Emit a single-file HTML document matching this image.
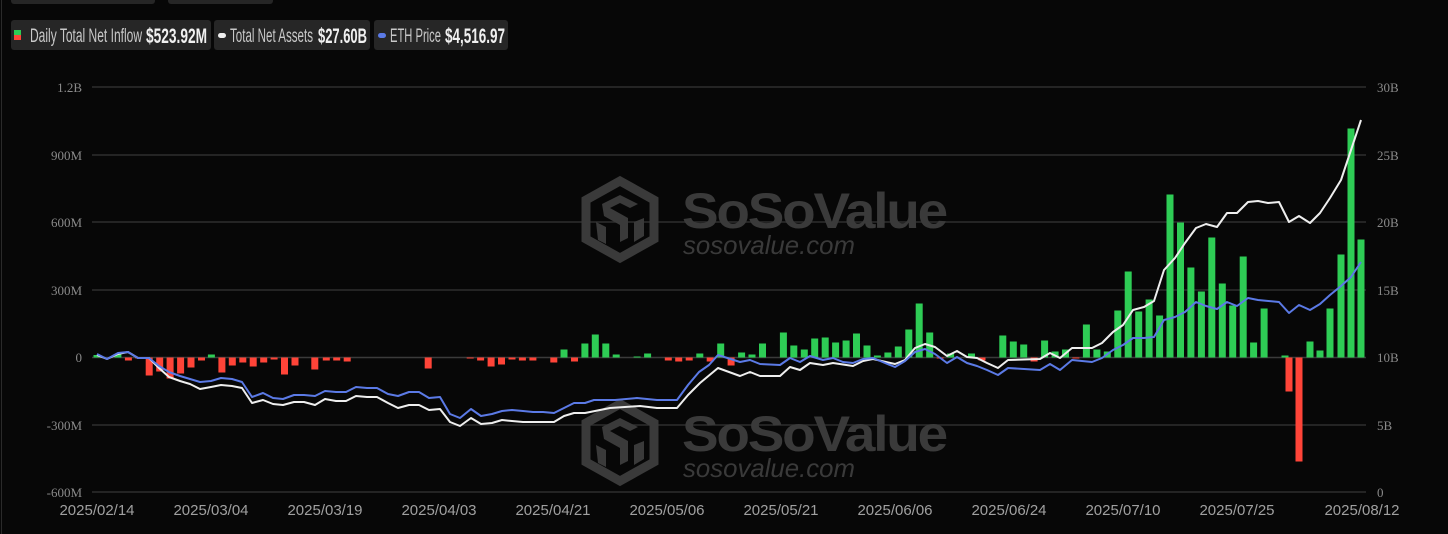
<!DOCTYPE html>
<html><head><meta charset="utf-8"><style>
html,body{margin:0;padding:0;background:#070707;width:1448px;height:534px;overflow:hidden}
svg{display:block}
.ax{font-family:"Liberation Serif",serif;font-size:13px;fill:#8a8a8a}
.dt{font-family:"Liberation Sans",sans-serif;font-size:15px;fill:#a0a0a0}
.lg{font-family:"Liberation Sans",sans-serif;font-size:19px;fill:#c8c8c8}
.lgb{font-family:"Liberation Sans",sans-serif;font-size:21px;font-weight:bold;fill:#f0f0f0}
</style></head><body>
<svg width="1448" height="534" viewBox="0 0 1448 534" xmlns="http://www.w3.org/2000/svg">
<rect width="1448" height="534" fill="#070707"/>
<line x1="1.5" y1="0" x2="1.5" y2="534" stroke="#2a2a2a"/>
<rect x="11" y="-6" width="144" height="10" rx="3" fill="#262626"/>
<rect x="168" y="-6" width="105" height="10" rx="3" fill="#262626"/>
<!-- legend -->
<rect x="11" y="20" width="200" height="30" rx="3" fill="#262626"/>
<rect x="14" y="30" width="7" height="5" fill="#2ecc55"/><rect x="14" y="35" width="7" height="5" fill="#ff4438"/>
<text x="30" y="42" class="lg" textLength="112" lengthAdjust="spacingAndGlyphs">Daily Total Net Inflow</text><text x="146" y="43" class="lgb" textLength="61" lengthAdjust="spacingAndGlyphs">$523.92M</text>
<rect x="214" y="20" width="156" height="30" rx="3" fill="#262626"/>
<rect x="218" y="33" width="8" height="5" rx="2.5" fill="#eeeeee"/>
<text x="230" y="42" class="lg" textLength="83" lengthAdjust="spacingAndGlyphs">Total Net Assets</text><text x="318" y="43" class="lgb" textLength="49" lengthAdjust="spacingAndGlyphs">$27.60B</text>
<rect x="374" y="20" width="134" height="30" rx="3" fill="#262626"/>
<rect x="378" y="33" width="8" height="5" rx="2.5" fill="#5b7ae6"/>
<text x="390" y="42" class="lg" textLength="51" lengthAdjust="spacingAndGlyphs">ETH Price</text><text x="445" y="43" class="lgb" textLength="60" lengthAdjust="spacingAndGlyphs">$4,516.97</text>
<!-- grid -->
<g stroke="#2e2e2e" stroke-width="1.5">
<line x1="92" y1="87" x2="1366" y2="87"/><line x1="92" y1="155" x2="1366" y2="155"/><line x1="92" y1="222" x2="1366" y2="222"/><line x1="92" y1="290" x2="1366" y2="290"/><line x1="92" y1="357.5" x2="1366" y2="357.5" stroke="#3a3a3a"/><line x1="92" y1="425" x2="1366" y2="425"/><line x1="92" y1="492" x2="1366" y2="492"/>
</g>
<g class="ax" text-anchor="end">
<text x="82" y="92">1.2B</text><text x="82" y="160">900M</text><text x="82" y="227">600M</text><text x="82" y="295">300M</text><text x="82" y="362">0</text><text x="82" y="430">-300M</text><text x="82" y="497">-600M</text>
</g>
<g class="ax">
<text x="1377" y="92">30B</text><text x="1377" y="160">25B</text><text x="1377" y="227">20B</text><text x="1377" y="295">15B</text><text x="1377" y="362">10B</text><text x="1377" y="430">5B</text><text x="1377" y="497">0</text>
</g>
<g class="dt" text-anchor="middle">
<text x="97" y="515">2025/02/14</text><text x="211" y="515">2025/03/04</text><text x="325" y="515">2025/03/19</text><text x="439" y="515">2025/04/03</text><text x="553" y="515">2025/04/21</text><text x="667" y="515">2025/05/06</text><text x="781" y="515">2025/05/21</text><text x="895" y="515">2025/06/06</text><text x="1009" y="515">2025/06/24</text><text x="1123" y="515">2025/07/10</text><text x="1237" y="515">2025/07/25</text><text x="1362" y="515">2025/08/12</text>
</g>
<!-- watermarks -->
<g id="wm" fill="#3a3a3a">
<path d="M620 181 L654 200 L654 239 L620 258 L586 239 L586 200 Z" fill="none" stroke="#3a3a3a" stroke-width="9"/>
<path d="M602 204 L620 195 L638 204 L630 208 L620 203 L610 208 L628 218 L628 238 L620 242 L620 225 L604 216 Z"/>
<path d="M596 222 L606 227 L606 244 L598 240 Z"/><path d="M634 222 L644 218 L644 236 L634 242 Z"/>
<text x="682" y="228" font-family="Liberation Sans,sans-serif" font-weight="bold" font-size="50" letter-spacing="-2" textLength="264" lengthAdjust="spacingAndGlyphs">SoSoValue</text>
<text x="683" y="254" font-family="Liberation Sans,sans-serif" font-style="italic" font-size="26" textLength="172" lengthAdjust="spacingAndGlyphs">sosovalue.com</text>
</g>
<use href="#wm" transform="translate(0,223)"/>
<!-- bars -->
<path fill="#2ecc55" d="M93.5 355h7v2.5h-7zM114.4 354.5h7v3h-7zM207.9 354.5h7v3h-7zM560.5 349.5h7v8h-7zM581.4 343.5h7v14h-7zM591.8 334.5h7v23h-7zM602.3 343.5h7v14h-7zM612.7 354.5h7v3h-7zM633.6 356.5h7v1h-7zM644.1 353.5h7v4h-7zM696.3 353.5h7v4h-7zM717.2 343.5h7v14h-7zM738.1 352.5h7v5h-7zM748.5 354.5h7v3h-7zM759 343.5h7v14h-7zM779.9 332.5h7v25h-7zM790.3 345.5h7v12h-7zM800.8 349.5h7v8h-7zM811.2 338.5h7v19h-7zM821.7 337.5h7v20h-7zM832.1 342.5h7v15h-7zM842.6 340.5h7v17h-7zM853 333.5h7v24h-7zM863.5 345.5h7v12h-7zM873.9 355.5h7v2h-7zM884.4 352.5h7v5h-7zM894.8 346.5h7v11h-7zM905.3 329.5h7v28h-7zM915.7 303.5h7v54h-7zM926.2 332.5h7v25h-7zM947.1 353.5h7v4h-7zM968 353.5h7v4h-7zM999.3 335.5h7v22h-7zM1009.8 341.5h7v16h-7zM1020.2 344.5h7v13h-7zM1041.1 340.5h7v17h-7zM1051.6 351.5h7v6h-7zM1062 349.5h7v8h-7zM1082.9 324.5h7v33h-7zM1093.4 349.5h7v8h-7zM1103.8 351.5h7v6h-7zM1114.3 310.5h7v47h-7zM1124.7 271.5h7v86h-7zM1135.2 311.5h7v46h-7zM1145.6 299.5h7v58h-7zM1156.1 315.5h7v42h-7zM1166.5 194.5h7v163h-7zM1177 222.5h7v135h-7zM1187.4 267.5h7v90h-7zM1197.9 291.5h7v66h-7zM1208.3 237.5h7v120h-7zM1218.8 283.5h7v74h-7zM1229.2 305.5h7v52h-7zM1239.7 256.5h7v101h-7zM1250.1 342.5h7v15h-7zM1260.6 308.5h7v49h-7zM1281.5 355.5h7v2h-7zM1306.5 341.5h7v16h-7zM1316.5 350.5h7v7h-7zM1326.5 308.5h7v49h-7zM1337.5 254.5h7v103h-7zM1347.5 128.5h7v229h-7zM1357.5 239.5h7v118h-7z"/>
<path fill="#ff4438" d="M124.9 357.5h7v3h-7zM135.3 357.5h7v1h-7zM145.7 357.5h7v18h-7zM156.2 357.5h7v14h-7zM166.6 357.5h7v21h-7zM177.1 357.5h7v16h-7zM187.5 357.5h7v10h-7zM198 357.5h7v3h-7zM218.4 357.5h7v15h-7zM228.8 357.5h7v8h-7zM239.3 357.5h7v5h-7zM249.7 357.5h7v9h-7zM260.2 357.5h7v5h-7zM270.6 357.5h7v2h-7zM281 357.5h7v17h-7zM291.5 357.5h7v8h-7zM311.3 357.5h7v12h-7zM322.8 357.5h7v3h-7zM333.2 357.5h7v3h-7zM343.7 357.5h7v4h-7zM424.7 357.5h7v11h-7zM466.7 357.5h7v1h-7zM477.1 357.5h7v3h-7zM487.6 357.5h7v9h-7zM498 357.5h7v7h-7zM508.5 357.5h7v2h-7zM518.9 357.5h7v3h-7zM529.4 357.5h7v3h-7zM550.3 357.5h7v5h-7zM571 357.5h7v4h-7zM664.8 357.5h7v3h-7zM675.2 357.5h7v4h-7zM685.7 357.5h7v3h-7zM706.7 357.5h7v4h-7zM727.6 357.5h7v8h-7zM936.7 357.5h7v1h-7zM978.5 357.5h7v3h-7zM1030.6 357.5h7v4h-7zM1072.4 357.5h7v1h-7zM1285.5 357.5h7v34h-7zM1295.5 357.5h7v104h-7z"/>
<!-- white line -->
<polyline fill="none" stroke="#eeeeee" stroke-width="2" stroke-linejoin="round" points="97,355 107,359 118,354 128,352 138,358 149,358 159,368 169,377 180,381 190,384 200,389 211,387 221,385 232,386 242,388 252,403 263,400 273,404 283,405 294,402 304,402 315,405 325,399 336,401 346,401 356,396 367,397 377,397 388,403 398,408 409,405 419,405 429,410 440,409 450,422 460,426 471,418 481,424 492,423 502,420 512,421 523,422 533,422 543,422 554,422 564,416 574,413 585,413 610,408 640,406 657,408 677,408 688,395 700,383 718,368 740,376 750,372 760,376 780,376 790,367 800,370 810,363 823,365 833,363 853,366 863,361 873,359 895,364 905,360 915,348 925,344 935,347 947,356 957,351 967,357 977,358 987,363 998,368 1008,360 1040,359 1050,353 1060,358 1072,348 1092,348 1102,343 1113,332 1123,325 1133,310 1144,307 1154,301 1164,270 1175,258 1185,243 1196,228 1206,224 1217,227 1227,213 1237,213 1248,202 1258,201 1268,203 1279,202 1289,222 1299,216 1310,223 1320,213 1330,198 1341,180 1351,150 1361,120"/>
<!-- blue line -->
<polyline fill="none" stroke="#5b7ae6" stroke-width="2" stroke-linejoin="round" points="97,354 107,359 118,353 128,352 138,358 149,358 159,366 169,372 180,376 190,379 200,382 211,381 221,378 232,379 242,382 252,397 263,393 273,398 283,399 294,395 304,395 315,396 325,391 336,392 346,392 356,387 367,388 377,388 388,394 398,396 409,392 419,392 429,398 440,397 450,414 460,418 471,409 481,416 492,414 502,411 512,410 523,411 533,412 543,412 554,413 564,408 574,403 585,403 594,400 615,400 637,398 657,400 677,400 688,385 699,372 709,365 718,355 740,362 750,360 760,364 780,365 790,358 800,362 810,356 823,360 833,358 843,362 853,363 863,359 873,358 885,363 895,367 905,361 915,352 925,349 935,354 947,363 957,357 967,363 977,366 987,370 998,375 1008,368 1040,370 1050,364 1060,370 1072,360 1092,362 1102,358 1113,350 1123,345 1133,338 1144,338 1154,337 1164,320 1175,317 1185,312 1196,302 1206,306 1217,309 1227,302 1237,306 1248,298 1258,300 1279,302 1289,313 1299,305 1310,310 1320,304 1330,295 1341,286 1351,277 1361,262"/>
</svg>
</body></html>
